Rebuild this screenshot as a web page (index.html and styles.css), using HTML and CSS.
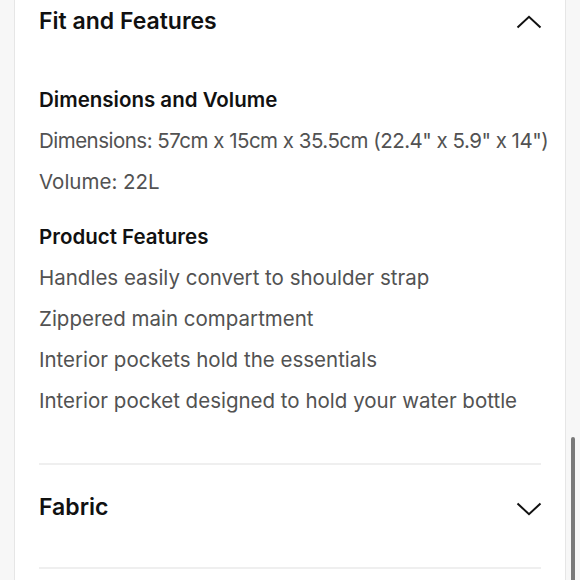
FILE: index.html
```html
<!DOCTYPE html>
<html lang="en">
<head>
<meta charset="utf-8">
<link rel="stylesheet" href="styles.css">
</head>
<body>
<div class="page">
  <div class="gutter-left"></div>
  <main class="content">
    <section class="accordion open">
      <div class="acc-head">
        <h2 class="acc-title">Fit and Features</h2>
        <svg class="chev chev-up" width="26" height="14" viewBox="0 0 26 14"><path d="M1.5 12.5 L13 1.8 L24.5 12.5" fill="none" stroke="#111" stroke-width="2"/></svg>
      </div>
      <div class="acc-body">
        <h3 class="sub">Dimensions and Volume</h3>
        <p class="line line-tight">Dimensions: 57cm x 15cm x 35.5cm (22.4" x 5.9" x 14")</p>
        <p class="line">Volume: 22L</p>
        <h3 class="sub sub-gap">Product Features</h3>
        <p class="line">Handles easily convert to shoulder strap</p>
        <p class="line">Zippered main compartment</p>
        <p class="line">Interior pockets hold the essentials</p>
        <p class="line">Interior pocket designed to hold your water bottle</p>
      </div>
    </section>
    <section class="accordion">
      <div class="acc-head closed">
        <h2 class="acc-title">Fabric</h2>
        <svg class="chev chev-down" width="26" height="14" viewBox="0 0 26 14"><path d="M1.5 1.5 L13 12.2 L24.5 1.5" fill="none" stroke="#111" stroke-width="2"/></svg>
      </div>
    </section>
  </main>
  <div class="gutter-right"><div class="thumb"></div></div>
</div>
</body>
</html>
```
FILE: styles.css
```css
html, body {
  margin: 0;
  padding: 0;
  background: #fff;
}
body {
  font-family: Inter, "Liberation Sans", sans-serif;
  color: #111;
  overflow: hidden;
}
.page {
  display: flex;
  height: 580px;
}
.gutter-left {
  width: 14px;
  flex: none;
  background: #f7f7f7;
  border-right: 1px solid #e6e6e6;
}
.content {
  flex: 1;
  padding: 0 24px;
  min-width: 0;
}
.gutter-right {
  width: 14px;
  flex: none;
  background: #f7f7f7;
  border-left: 1px solid #e6e6e6;
  position: relative;
}
.thumb {
  position: absolute;
  left: 5px;
  top: 437px;
  width: 4px;
  height: 160px;
  border-radius: 2px;
  background: #7a7a7a;
}
.accordion {
  border-bottom: 2px solid #efefef;
}
.acc-head {
  display: flex;
  align-items: center;
  justify-content: space-between;
  height: 40px;
}
.acc-head.closed {
  height: 84px;
  margin-bottom: 18px;
}
.acc-title {
  margin: 0;
  font-size: 23px;
  font-weight: 600;
  padding-top: 1px;
}
.chev {
  margin-right: -1px;
}
.chev-up {
  margin-top: 4px;
}
.chev-down {
  margin-top: 5px;
}
.acc-body {
  padding: 39px 0 41px;
}
.sub {
  margin: 0;
  font-size: 20.5px;
  font-weight: 600;
  line-height: 41px;
}
.sub-gap {
  margin-top: 13px;
}
.line {
  margin: 0;
  font-size: 20.5px;
  line-height: 41.3px;
  color: #525252;
  white-space: nowrap;
}
.line-tight {
  letter-spacing: -0.025em;
}
```
